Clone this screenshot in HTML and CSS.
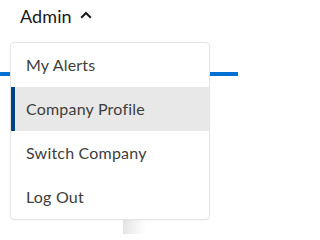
FILE: index.html
```html
<!DOCTYPE html>
<html lang="en">
<head>
<meta charset="utf-8">
<link rel="stylesheet" href="styles.css">
</head>
<body>
<div class="page">
  <header class="nav">
    <button class="trigger">
      <span class="trigger-label">Admin</span>
      <svg class="chevron" width="12" height="8" viewBox="0 0 12 8"><path d="M1.2 6.8 L6 2 L10.8 6.8" fill="none" stroke="#181818" stroke-width="2"/></svg>
    </button>
  </header>
  <main class="content">
    <div class="panel"></div>
  </main>
  <ul class="menu">
    <li class="item">My Alerts</li>
    <li class="item active">Company Profile</li>
    <li class="item">Switch Company</li>
    <li class="item">Log Out</li>
  </ul>
</div>
</body>
</html>
```
FILE: styles.css
```css
* { box-sizing: border-box; }
html, body { margin: 0; padding: 0; background: #fff; }
body { font-family: Lato, "Open Sans", sans-serif; }
.page { position: relative; width: 238px; height: 234px; overflow: hidden; }
.nav {
  height: 76px;
  border-bottom: 4px solid #0070d2;
  padding: 3px 0 0 20px;
}
.trigger {
  display: flex;
  align-items: center;
  gap: 8px;
  border: 0;
  background: none;
  padding: 0;
  font: inherit;
  font-size: 18px;
  letter-spacing: 0.1px;
  color: #181818;
  line-height: 26px;
}
.chevron { display: block; margin-top: -3px; }
.content { padding: 144px 0 0 123px; }
.panel {
  width: 115px;
  height: 20px;
  background: linear-gradient(to right, #e4e4e4, #fafafa 18px, #fff 24px);
}
.menu {
  position: absolute;
  top: 42px;
  left: 10px;
  width: 200px;
  margin: 0;
  padding: 0;
  list-style: none;
  background: #fff;
  border: 1px solid #e5e5e5;
  border-radius: 4px;
  box-shadow: 0 1px 2px rgba(0,0,0,0.04);
}
.item {
  height: 44px;
  display: flex;
  align-items: center;
  padding: 0 0 1px 15px;
  font-size: 16px;
  letter-spacing: 0.2px;
  color: #3e3e3c;
}
.item.active {
  background: #e8e8e8;
  box-shadow: inset 4px 0 0 #014486;
}
```
